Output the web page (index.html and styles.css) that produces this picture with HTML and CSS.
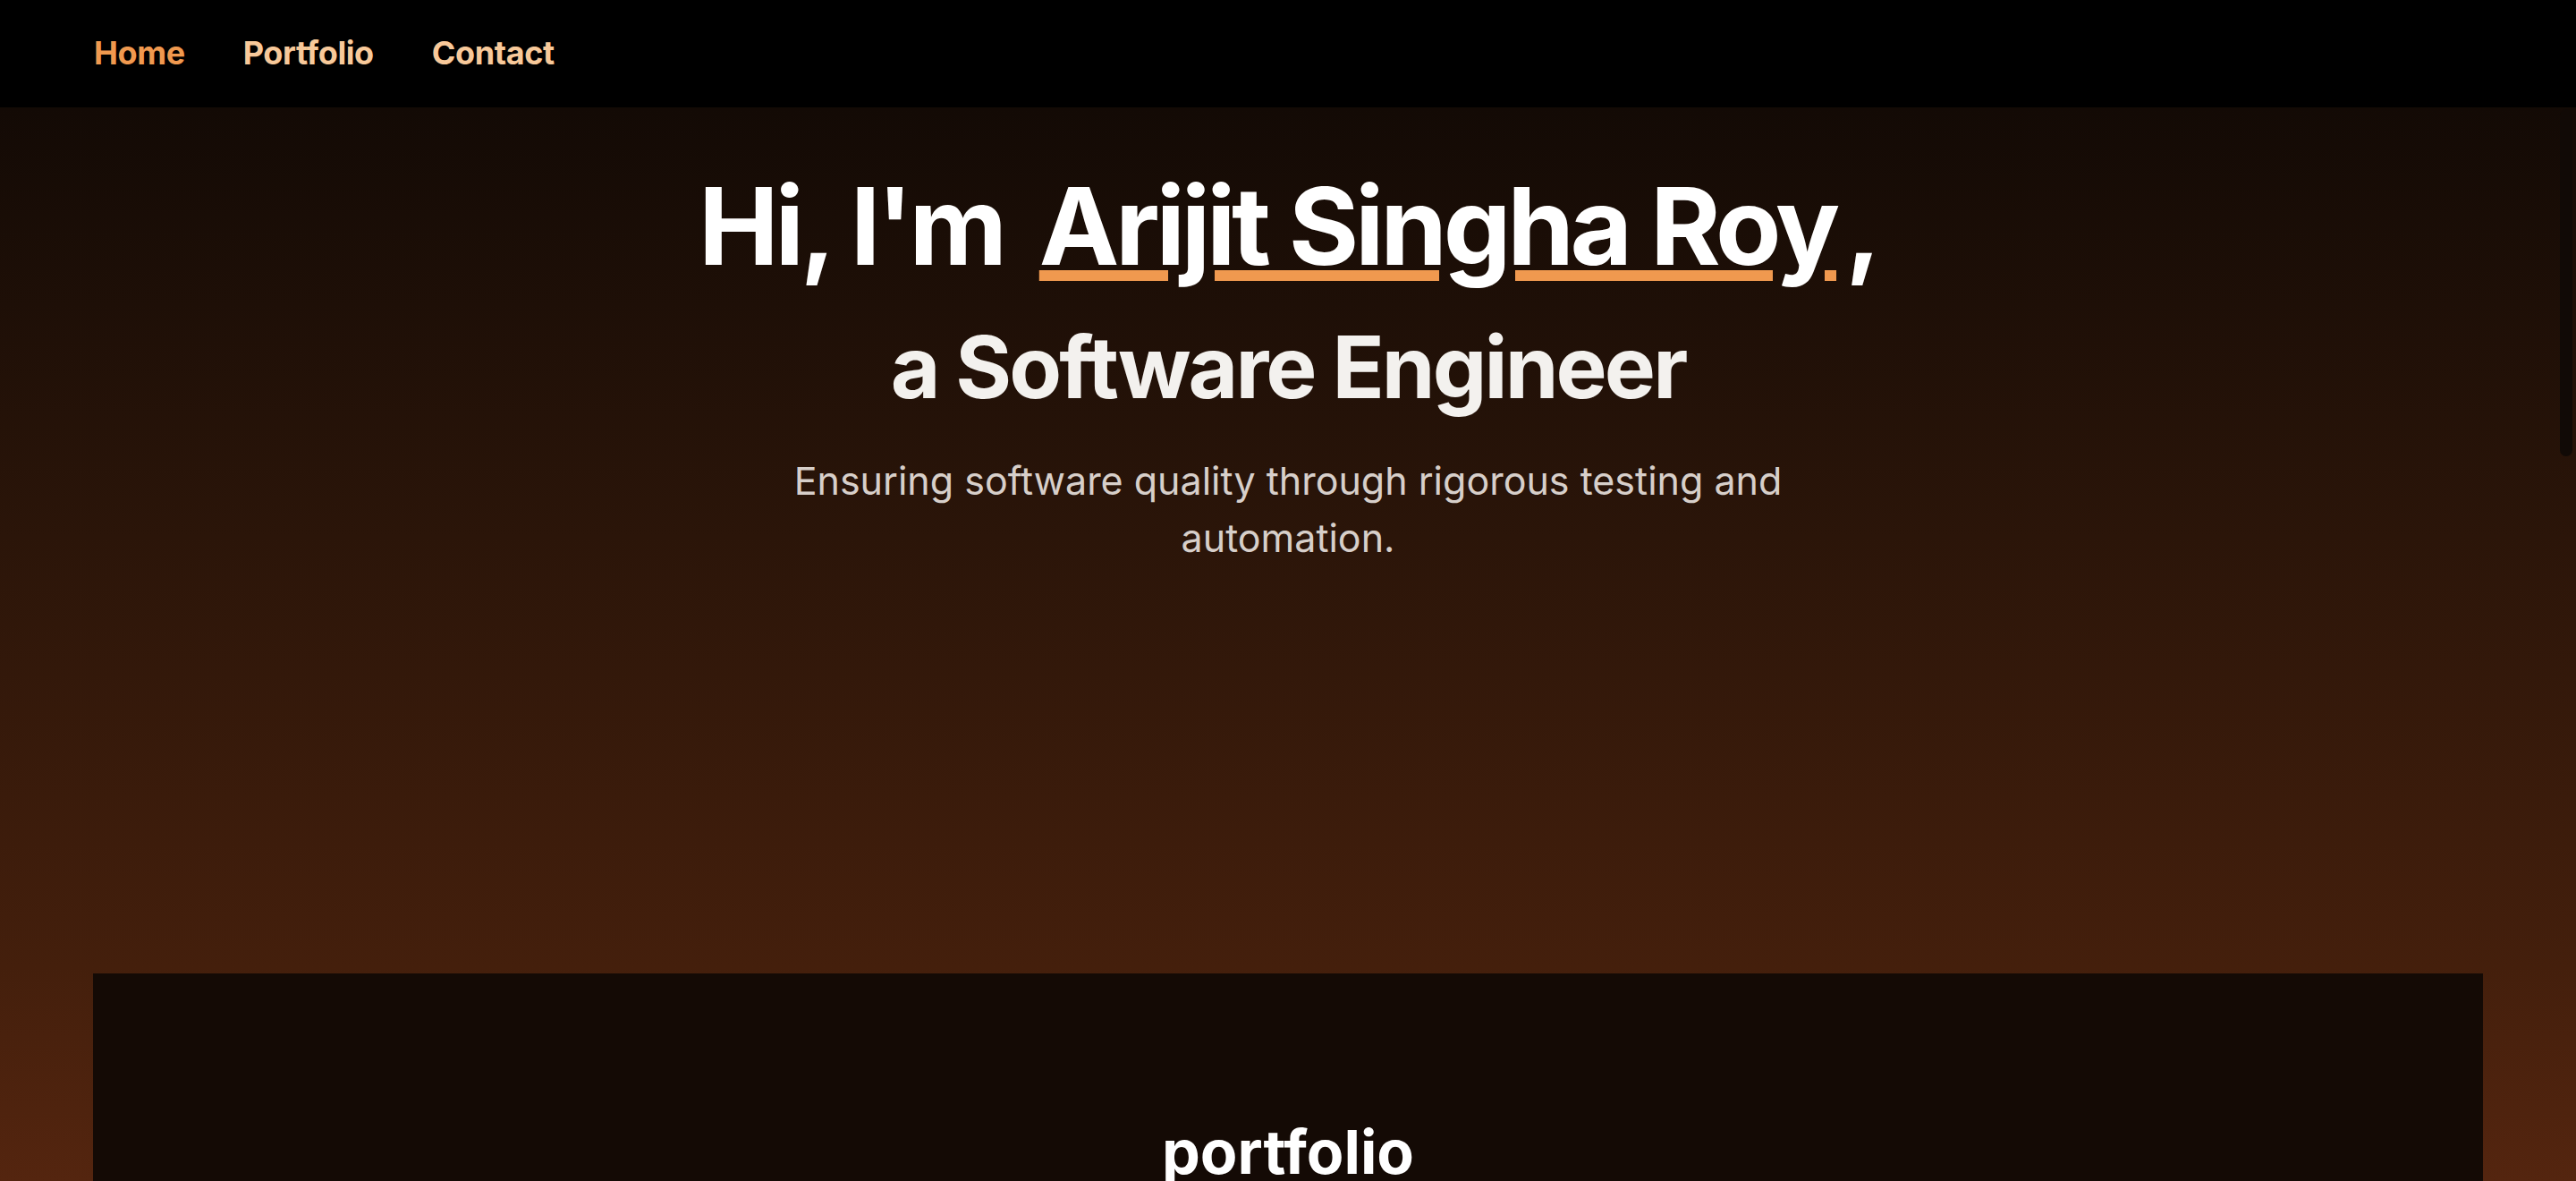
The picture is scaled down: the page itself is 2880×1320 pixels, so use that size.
FILE: index.html
```html
<!DOCTYPE html>
<html lang="en">
<head>
<meta charset="utf-8">
<title>Arijit Singha Roy</title>
<link rel="stylesheet" href="styles.css">
</head>
<body>
<nav class="topnav">
  <a class="nav-link active" href="#home">Home</a>
  <a class="nav-link" href="#portfolio">Portfolio</a>
  <a class="nav-link" href="#contact">Contact</a>
</nav>
<main class="page">
  <section class="hero" id="home">
    <h1 class="hero-title">
      <span class="line-1">Hi, I'm <span class="name">Arijit Singha Roy</span> <span class="comma">,</span></span>
      <span class="line-2">a Software Engineer</span>
    </h1>
    <p class="hero-sub">Ensuring software quality through rigorous testing and automation.</p>
  </section>
  <section class="portfolio" id="portfolio">
    <h2 class="section-title">portfolio</h2>
  </section>
  <div class="scroll-thumb"></div>
</main>
</body>
</html>
```
FILE: styles.css
```css
* { box-sizing: border-box; }
html, body {
  margin: 0;
  height: 1320px;
  overflow: hidden;
  background: #000;
  font-family: Inter, "Noto Sans", "Liberation Sans", sans-serif;
}
.topnav {
  height: 120px;
  background: #000;
  display: flex;
  align-items: center;
  gap: 65px;
  padding-left: 105px;
}
.nav-link {
  font-size: 36px;
  font-weight: 700;
  letter-spacing: -0.4px;
  color: #f8c99a;
  text-decoration: none;
  line-height: 1.21;
}
.nav-link.active { color: #f0994f; }

.page {
  position: relative;
  height: 1200px;
  padding: 0 104px;
  background: linear-gradient(to bottom, #130a05 0%, #2b1509 40%, #441f0c 80%, #54250f 100%);
  overflow: hidden;
}
.hero {
  height: 968px;
  padding-top: 61px;
  text-align: center;
}
.hero-title {
  margin: 0;
  font-weight: 700;
}
.line-1 {
  display: block;
  font-size: 120px;
  line-height: 144px;
  letter-spacing: -0.036em;
  color: #ffffff;
}
.name {
  margin-left: 16px;
  text-decoration: underline;
  text-decoration-color: #f0994f;
  text-decoration-thickness: 12px;
  text-underline-offset: 6px;
}
.comma { margin-left: -14px; }
.line-2 {
  display: block;
  margin-top: 28px;
  font-size: 96px;
  line-height: 115px;
  letter-spacing: -0.03em;
  color: #f3f1ee;
}
.hero-sub {
  margin: 37px auto 0;
  max-width: 1180px;
  font-size: 43px;
  line-height: 64px;
  font-weight: 400;
  color: #d7cfca;
}
.portfolio {
  background: #140a05;
  height: 400px;
  padding-top: 158px;
  text-align: center;
}
.section-title {
  margin: 0;
  font-size: 68px;
  line-height: 82px;
  font-weight: 700;
  color: #ffffff;
}
.scroll-thumb {
  position: absolute;
  top: 2px;
  right: 4px;
  width: 14px;
  height: 388px;
  border-radius: 7px;
  background: #110a06;
}
```
